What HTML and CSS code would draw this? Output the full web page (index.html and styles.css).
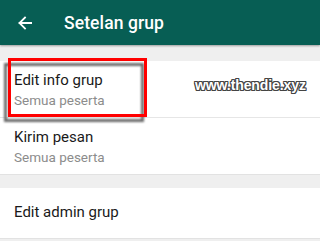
FILE: index.html
```html
<!DOCTYPE html>
<html>
<head>
<meta charset="utf-8">
<link rel="stylesheet" href="styles.css">
</head>
<body>
<div class="screen">
  <header class="appbar">
    <svg class="back" width="14" height="14" viewBox="0 0 14 14"><path d="M13.5 7H1.5M7 1.5L1.5 7L7 12.5" fill="none" stroke="#fff" stroke-width="1.8" stroke-linecap="square"/></svg>
    <h1 class="title">Setelan grup</h1>
  </header>
  <section class="group first">
    <div class="row">
      <div class="label">Edit info grup</div>
      <div class="sub">Semua peserta</div>
    </div>
    <div class="row">
      <div class="label">Kirim pesan</div>
      <div class="sub">Semua peserta</div>
    </div>
  </section>
  <section class="group second">
    <div class="row single">
      <div class="label">Edit admin grup</div>
    </div>
  </section>
  <div class="mark-shadow"></div>
  <div class="mark-box"></div>
  <div class="watermark">www.thendie.xyz</div>
</div>
</body>
</html>
```
FILE: styles.css
```css
* { box-sizing: border-box; }
html, body { margin: 0; padding: 0; }
body { background: #efefef; font-family: Roboto, "Liberation Sans", sans-serif; }
.screen { position: relative; width: 320px; height: 241px; overflow: hidden; background: #efefef; }
.appbar {
  height: 45px; background: #075e54; display: flex; align-items: center;
  padding-left: 18px; box-shadow: 0 1px 2px rgba(0,0,0,0.35); position: relative; z-index: 1;
}
.back { display: block; }
.title { margin: 0 0 0 32px; color: #fff; font-size: 17.5px; font-weight: 500; letter-spacing: 0.1px; }
.group { background: #fff; }
.first { margin-top: 16px; border-bottom: 1px solid #e2e2e2; }
.second { margin-top: 13px; border-bottom: 1px solid #e2e2e2; }
.row { height: 57px; padding: 9px 0 0 14px; border-bottom: 1px solid #e6e6e6; }
.row:last-child { border-bottom: none; height: 56px; }
.row.single { height: 50px; padding-top: 14px; }
.label { font-size: 15px; color: #1a1a1a; line-height: 20px; }
.sub { font-size: 13.5px; color: #8c8c8c; line-height: 18px; margin-top: 1px; }
.mark-shadow {
  position: absolute; left: 4px; top: 63px; width: 140px; height: 59px;
  border: 3px solid #6a6a6a; filter: blur(0.9px);
}
.mark-box {
  position: absolute; left: 8px; top: 58px; width: 139px; height: 59px;
  border: 3px solid #f00;
}
.watermark {
  position: absolute; left: 195px; top: 77px; font-family: "Liberation Sans", Arial, sans-serif;
  font-weight: bold; font-size: 14px; color: #fff; letter-spacing: -0.1px;
  text-shadow: 1px 0 0 #444, -1px 0 0 #444, 0 1px 0 #444, 0 -1px 0 #444, 1px 1px 0 #444, -1px -1px 0 #444, 1px -1px 0 #444, -1px 1px 0 #444;
}
```
